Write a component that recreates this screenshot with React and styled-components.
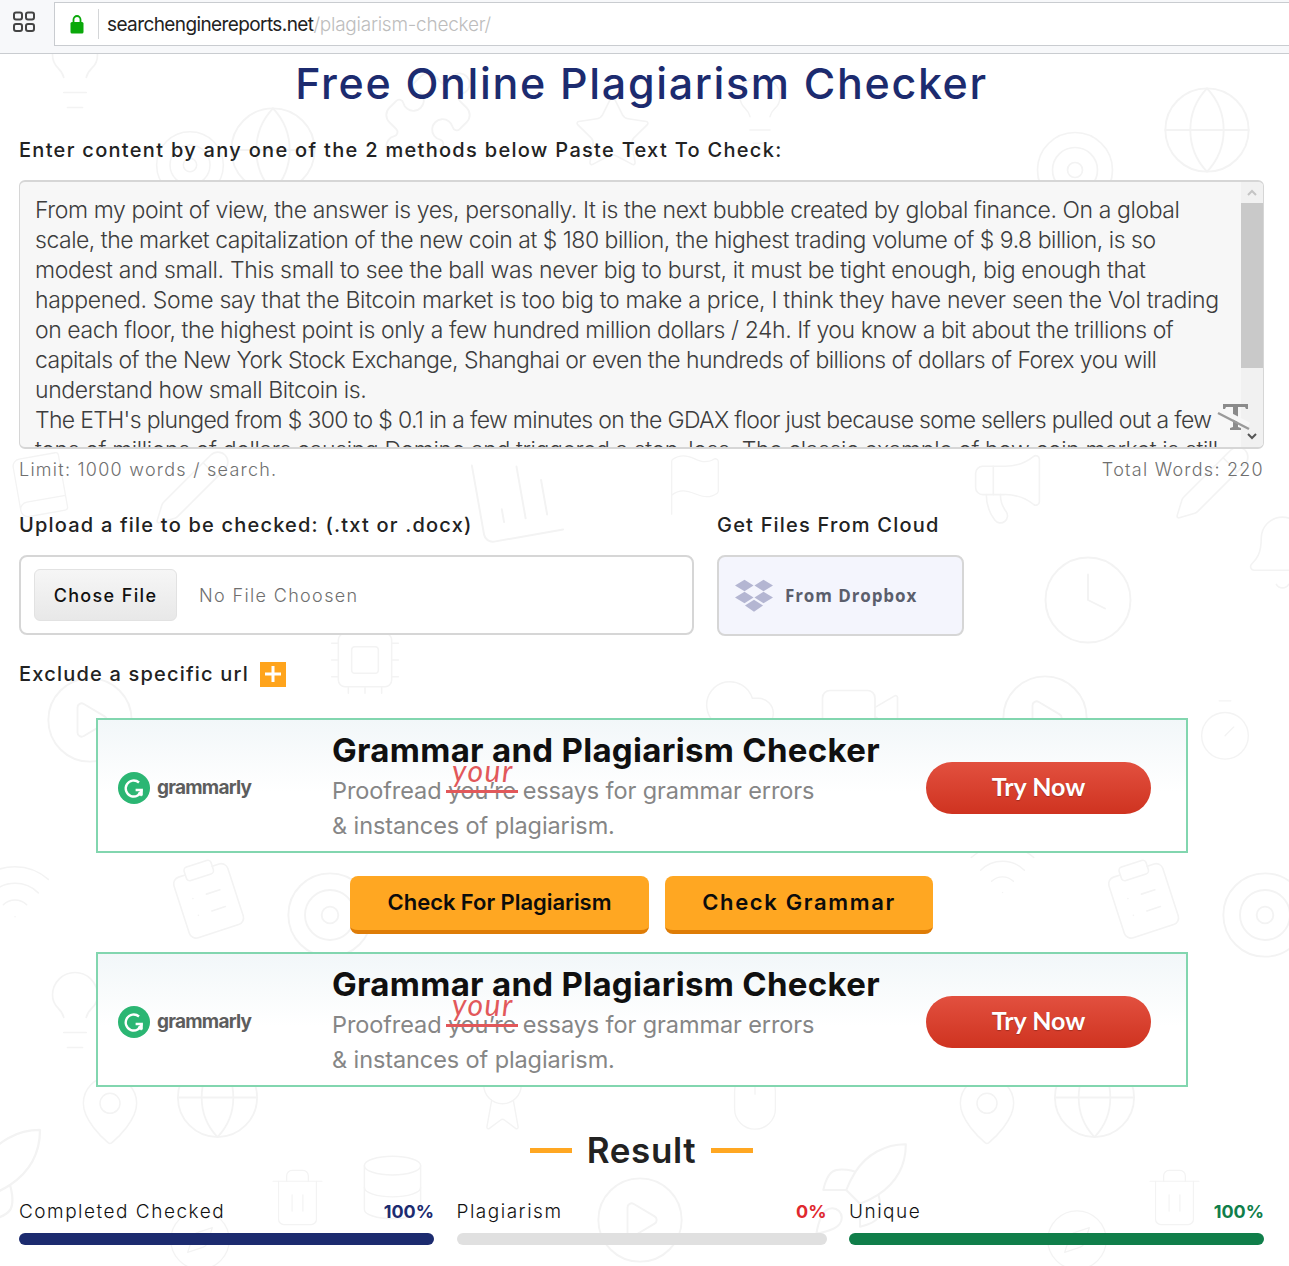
import React from "react";
import styled, { createGlobalStyle } from "styled-components";
import {
  Lightbulb, Globe, Puzzle, Star, Target, Clock, Pencil, Bell, Megaphone, CirclePlay, ChartColumn, Flag,
  Cpu, Cloud, Video, Timer, ClipboardList, Wifi, Rocket, MapPin, Trash2, Compass, Database, Award, Mouse, Book,
} from "lucide-react";

const UI_FONT = `"Inter", "Liberation Sans", sans-serif`;

const GlobalStyle = createGlobalStyle`
  html, body { margin: 0; padding: 0; background: #fff; }
  body { font-family: ${UI_FONT}; height: 1266px; overflow: hidden; }
`;

const Page = styled.div`
  position: relative;
  width: 1289px;
  height: 1266px;
  overflow: hidden;
`;

const Wallpaper = styled.svg`
  position: absolute;
  top: 0;
  left: 0;
  color: #f3f3f3;
`;

const Chrome = styled.header`
  position: relative;
  height: 53px;
  background: #f7f8fa;
  border-bottom: 1px solid #c9ccd0;
  display: flex;
  align-items: flex-start;
`;

const AppsButton = styled.div`
  width: 48px;
  padding-right: 6px;
  height: 44px;
  display: flex;
  align-items: center;
  justify-content: center;
`;

const AddressBar = styled.div`
  flex: 1;
  height: 42px;
  margin-top: 2px;
  background: #fff;
  border: 1px solid #c9ccd0;
  border-right: 0;
  display: flex;
  align-items: center;
`;

const LockSlot = styled.div`
  width: 43px;
  height: 30px;
  display: flex;
  align-items: center;
  justify-content: center;
  border-right: 1px solid #d4d6d8;
`;

const Url = styled.div`
  margin-left: 8px;
  font-size: 19px;
  font-weight: 400;
  letter-spacing: -0.6px;
  color: #222;
  span { color: #bdbdbd; font-weight: 300; letter-spacing: -0.25px; }
`;

const Main = styled.main`
  position: relative;
  padding: 0 25px 0 19px;
  display: flex;
  flex-direction: column;
`;

const Title = styled.h1`
  margin: 3px 0 0;
  height: 52px;
  line-height: 52px;
  text-align: center;
  font-size: 43px;
  font-weight: 500;
  letter-spacing: 1.65px;
  color: #1c2b6f;
`;

const Label = styled.div`
  font-size: 20px;
  font-weight: 500;
  line-height: 28px;
  letter-spacing: ${(p) => p.$spacing || "1.2px"};
  color: #222;
`;

const LeadLabel = styled(Label)`
  margin-top: 27px;
`;

const TextBox = styled.div`
  margin-top: 16px;
  height: 269px;
  box-sizing: border-box;
  border: 1px solid #d6d6d6;
  border-top: 2px solid #d6d6d6;
  border-bottom: 2px solid #d6d6d6;
  border-radius: 6px;
  background: #f7f7f7;
  display: flex;
  overflow: hidden;
  position: relative;
`;

const TextLines = styled.div`
  flex: 1;
  padding: 13px 0 0 15px;
  font-size: 23px;
  font-weight: 300;
  line-height: 30px;
  color: #3d3d3d;
  white-space: nowrap;
  overflow: hidden;
`;

const PassageLine = styled.div`
  letter-spacing: ${(p) => p.$spacing}px;
`;

const ScrollTrack = styled.div`
  width: 22px;
  background: #f1f1f1;
  display: flex;
  flex-direction: column;
`;

const ScrollArrow = styled.div`
  height: ${(p) => p.$h}px;
  display: flex;
  align-items: center;
  justify-content: center;
`;

const ScrollThumb = styled.div`
  height: 165px;
  background: #c9c9c9;
`;

const ScrollRest = styled.div`
  flex: 1;
`;

const TextSizeMark = styled.svg`
  position: absolute;
  left: 1195px;
  top: 219px;
`;

const LimitRow = styled.div`
  display: flex;
  justify-content: space-between;
  margin-top: 7px;
  height: 27px;
  line-height: 27px;
  font-size: 18px;
  font-weight: 300;
  letter-spacing: 1.25px;
  color: #6f6f6f;
`;

const UploadGrid = styled.div`
  margin-top: 28px;
  display: grid;
  grid-template-columns: 698px 247px;
  row-gap: 16px;
`;

const UploadBox = styled.div`
  width: 675px;
  height: 80px;
  box-sizing: border-box;
  border: 2px solid #d6d6d6;
  border-radius: 8px;
  padding-left: 13px;
  background: #fff;
  display: flex;
  align-items: center;
`;

const ChooseButton = styled.div`
  width: 143px;
  height: 52px;
  box-sizing: border-box;
  border: 1px solid #e2e2e2;
  border-radius: 6px;
  background: linear-gradient(#f6f6f6, #e8e8e8);
  display: flex;
  align-items: center;
  justify-content: center;
  font-size: 18px;
  font-weight: 500;
  letter-spacing: 1.35px;
  color: #111;
`;

const NoFile = styled.div`
  margin-left: 22px;
  font-size: 18px;
  font-weight: 300;
  letter-spacing: 1.35px;
  color: #6f6f6f;
`;

const DropboxBox = styled.div`
  height: 81px;
  box-sizing: border-box;
  border: 2px solid #d6d6d6;
  border-radius: 8px;
  background: #f4f5fd;
  padding-left: 16px;
  display: flex;
  align-items: center;
  gap: 12px;
  font-family: "Open Sans", sans-serif;
  font-size: 17px;
  font-weight: 700;
  letter-spacing: 0.9px;
  color: #5b5e6c;
`;

const ExcludeRow = styled.div`
  margin-top: 24px;
  height: 28px;
  display: flex;
  align-items: center;
  gap: 11px;
`;

const PlusBox = styled.div`
  width: 26px;
  height: 25px;
  background: #ffa41c;
  display: flex;
  align-items: center;
  justify-content: center;
`;

const Banner = styled.div`
  margin: ${(p) => p.$top}px 0 0 77px;
  width: 1092px;
  height: 135px;
  box-sizing: border-box;
  border: 2px solid #82d6af;
  background: linear-gradient(#f2f7f9, #fff 55%);
  display: flex;
  font-family: ${UI_FONT};
`;

const Brand = styled.div`
  width: 234px;
  padding: 4px 0 0 20px;
  box-sizing: border-box;
  display: flex;
  align-items: center;
  gap: 7px;
  font-size: 19px;
  font-weight: 700;
  letter-spacing: -0.75px;
  color: #5d5d5d;
`;

const BannerCopy = styled.div`
  width: 594px;
  display: flex;
  flex-direction: column;
`;

const BannerTitle = styled.div`
  margin-top: 9px;
  height: 44px;
  line-height: 42px;
  font-size: 33px;
  font-weight: 700;
  letter-spacing: 0.3px;
  color: #101010;
  white-space: nowrap;
`;

const BannerLine = styled.div`
  height: 35px;
  line-height: 35px;
  font-size: 23.5px;
  font-weight: 400;
  letter-spacing: -0.1px;
  color: #868686;
  white-space: nowrap;
`;

const Struck = styled.span`
  position: relative;
  &::after {
    content: "";
    position: absolute;
    left: -2px;
    right: -2px;
    top: 14px;
    height: 3px;
    background: #e2585a;
  }
`;

const Correction = styled.span`
  position: absolute;
  left: 4px;
  top: -21px;
  font-family: "Lato", sans-serif;
  font-style: italic;
  font-size: 30px;
  line-height: 30px;
  letter-spacing: 1.5px;
  color: #e2585a;
`;

const TryNow = styled.div`
  margin-top: 42px;
  width: 225px;
  height: 52px;
  padding-bottom: 4px;
  box-sizing: border-box;
  border-radius: 26px;
  background: linear-gradient(#e2503f, #cf3320);
  display: flex;
  align-items: center;
  justify-content: center;
  font-family: "Lato", sans-serif;
  font-size: 25px;
  font-weight: 700;
  color: #fff;
  text-shadow: 0 1px 1px rgba(0, 0, 0, 0.25);
`;

const Actions = styled.div`
  margin-top: 23px;
  display: flex;
  padding-left: 331px;
  gap: 16px;
`;

const ActionButton = styled.div`
  width: ${(p) => p.$w}px;
  height: 58px;
  box-sizing: border-box;
  padding-bottom: 2px;
  border-radius: 8px;
  border-bottom: 4px solid #de7c06;
  background: #ffa722;
  display: flex;
  align-items: center;
  justify-content: center;
  font-size: 22px;
  font-weight: 600;
  letter-spacing: ${(p) => p.$spacing};
  color: #0c0c0c;
`;

const ResultHead = styled.div`
  margin-top: 40px;
  height: 46px;
  display: flex;
  align-items: center;
  justify-content: center;
  gap: 15px;
  font-size: 35px;
  font-weight: 600;
  letter-spacing: 0.6px;
  color: #222;
`;

const Dash = styled.i`
  width: 42px;
  height: 5px;
  background: #ffa722;
`;

const Stats = styled.div`
  margin-top: 23px;
  display: flex;
  justify-content: space-between;
`;

const Stat = styled.div`
  width: ${(p) => p.$w}px;
`;

const StatHead = styled.div`
  height: 30px;
  display: flex;
  justify-content: space-between;
  align-items: center;
  font-size: 19px;
  font-weight: 300;
  letter-spacing: 1.5px;
  color: #111;
  b {
    font-size: 18px;
    font-weight: 700;
    letter-spacing: 0;
    color: ${(p) => p.$accent};
  }
`;

const Bar = styled.div`
  margin-top: 7px;
  height: 12px;
  border-radius: 6px;
  background: #e0e0e0;
  overflow: hidden;
`;

const BarFill = styled.div`
  height: 100%;
  background: ${(p) => p.$color};
`;

// icon, x, y, size, rotation: the faint drawings behind the page
const wallpaper = [
  [Lightbulb, 30, 25, 90], [Globe, 223, 100, 100], [Puzzle, 378, 65, 100], [Star, 570, 90, 85],
  [Lightbulb, 720, 70, 80], [Globe, 1157, 80, 100], [Target, 1030, 125, 90], [Target, 150, 125, 80],
  [Book, 5, 450, 70, -10], [Pencil, 150, 445, 85], [ChartColumn, 465, 445, 105, -10], [Megaphone, 965, 445, 85],
  [Flag, 660, 450, 70], [Pencil, 1170, 440, 85], [Clock, 1037, 549, 102], [Bell, 1240, 510, 85],
  [CirclePlay, 995, 668, 100], [Cpu, 325, 620, 80], [CirclePlay, 40, 670, 100], [Cloud, 700, 665, 80],
  [Video, 815, 668, 90], [Timer, 1190, 695, 70], [ClipboardList, 165, 855, 85, -18], [ClipboardList, 1100, 855, 85, -18],
  [Target, 280, 865, 100], [Target, 1215, 865, 100], [Wifi, 965, 830, 75], [Wifi, -25, 850, 80],
  [Lightbulb, 30, 965, 90], [Lightbulb, 907, 965, 90], [Rocket, -70, 1120, 120], [Rocket, 805, 1135, 110],
  [MapPin, 70, 1070, 80], [MapPin, 947, 1070, 80], [Globe, 170, 1050, 95], [Globe, 1047, 1050, 95],
  [Trash2, 265, 1165, 65], [Trash2, 1142, 1165, 65], [Compass, 165, 1205, 70], [Compass, 1042, 1205, 70],
  [Database, 355, 1150, 75], [Award, 465, 1060, 75], [CirclePlay, 590, 1170, 100], [Mouse, 720, 1065, 70],
];

// each line carries its own tracking so the rag of the text stays the same
const passage = [
  ["From my point of view, the answer is yes, personally. It is the next bubble created by global finance. On a global", -0.41],
  ["scale, the market capitalization of the new coin at $ 180 billion, the highest trading volume of $ 9.8 billion, is so", -0.485],
  ["modest and small. This small to see the ball was never big to burst, it must be tight enough, big enough that", -0.33],
  ["happened. Some say that the Bitcoin market is too big to make a price, I think they have never seen the Vol trading", -0.3],
  ["on each floor, the highest point is only a few hundred million dollars / 24h. If you know a bit about the trillions of", -0.43],
  ["capitals of the New York Stock Exchange, Shanghai or even the hundreds of billions of dollars of Forex you will", -0.535],
  ["understand how small Bitcoin is.", -0.4],
  ["The ETH's plunged from $ 300 to $ 0.1 in a few minutes on the GDAX floor just because some sellers pulled out a few", -0.67],
  ["tons of millions of dollars causing Domino and triggered a stop-loss. The classic example of how coin market is still", -0.38],
];

const stats = [
  { label: "Completed Checked", value: "100%", w: 415, accent: "#1c2b6f", fill: "#1c2b6f", pct: 100 },
  { label: "Plagiarism", value: "0%", w: 370, accent: "#e0282e", fill: "#e0282e", pct: 0 },
  { label: "Unique", value: "100%", w: 415, accent: "#107e4a", fill: "#107e4a", pct: 100 },
];

function GrammarlyMark() {
  return (
    <svg width="32" height="32" viewBox="0 0 32 32">
      <circle cx="16" cy="16" r="16" fill="#2bb673" />
      <path d="M21 10.500a8 8 0 1 0 2.600 7.500h-6" fill="none" stroke="#fff" strokeWidth="2.400" />
      <path d="M23.800 18v5.400M20.500 20.500l3.300 3.300" fill="none" stroke="#fff" strokeWidth="2" />
    </svg>
  );
}

function DropboxMark() {
  return (
    <svg width="38" height="34" viewBox="0 0 40 34" fill="#b4b6d2">
      <path d="M10 0l9.500 6-9.500 6-10-6zM30 0l10 6-10 6-9.500-6zM10 12.500l9.500 6-9.500 6-10-6zM30 12.500l10 6-10 6-9.500-6zM20 21l9.500 6-9.500 6.500L10.500 27z" />
    </svg>
  );
}

function AdBanner({ top }) {
  return (
    <Banner $top={top}>
      <Brand>
        <GrammarlyMark />
        grammarly
      </Brand>
      <BannerCopy>
        <BannerTitle>Grammar and Plagiarism Checker</BannerTitle>
        <BannerLine>
          Proofread{" "}
          <Struck>
            you’re
            <Correction>your</Correction>
          </Struck>{" "}
          essays for grammar errors
        </BannerLine>
        <BannerLine>&amp; instances of plagiarism.</BannerLine>
      </BannerCopy>
      <TryNow>Try Now</TryNow>
    </Banner>
  );
}

export default function App() {
  return (
    <Page>
      <GlobalStyle />
      <Wallpaper width="1289" height="1266">
        {wallpaper.map(([Icon, x, y, size, turn = 0], i) => (
          <g key={i} transform={`rotate(${turn} ${x + size / 2} ${y + size / 2})`}>
            <Icon x={x} y={y} width={size} height={size} strokeWidth={0.45} />
          </g>
        ))}
      </Wallpaper>

      <Chrome>
        <AppsButton>
          <svg width="24" height="24" viewBox="0 0 24 24" fill="none" stroke="#444" strokeWidth="2">
            <rect x="2" y="2.500" width="8" height="7" rx="2" />
            <rect x="14" y="2.500" width="8" height="7" rx="2" />
            <rect x="2" y="14" width="8" height="7" rx="2" />
            <rect x="14" y="14" width="8" height="7" rx="2" />
          </svg>
        </AppsButton>
        <AddressBar>
          <LockSlot>
            <svg width="14" height="20" viewBox="0 0 14 20">
              <path d="M3.500 9V5.500a3.500 3.500 0 0 1 7 0V9" fill="none" stroke="#0aa80a" strokeWidth="1.800" />
              <rect x="0.500" y="8" width="13" height="11.500" rx="1.500" fill="#0aa80a" />
            </svg>
          </LockSlot>
          <Url>
            searchenginereports.net<span>/plagiarism-checker/</span>
          </Url>
        </AddressBar>
      </Chrome>

      <Main>
        <Title>Free Online Plagiarism Checker</Title>
        <LeadLabel $spacing="1.3px">Enter content by any one of the 2 methods below Paste Text To Check:</LeadLabel>
        <TextBox>
          <TextLines>
            {passage.map(([line, spacing]) => (
              <PassageLine key={line} $spacing={spacing}>{line}</PassageLine>
            ))}
          </TextLines>
          <ScrollTrack>
            <ScrollArrow $h={21}>
              <svg width="10" height="7" viewBox="0 0 10 7" fill="none" stroke="#c4c4c4" strokeWidth="2">
                <path d="M1 6l4-4 4 4" />
              </svg>
            </ScrollArrow>
            <ScrollThumb />
            <ScrollRest />
            <ScrollArrow $h={21}>
              <svg width="10" height="7" viewBox="0 0 10 7" fill="none" stroke="#555" strokeWidth="2">
                <path d="M1 1l4 4 4-4" />
              </svg>
            </ScrollArrow>
          </ScrollTrack>
          <TextSizeMark width="36" height="34" viewBox="0 0 36 34">
            <path d="M8 3h25v5h-2l-1-2h-7v20l3 1v2H15v-2l3-1V6h-7l-1 2H8z" fill="#8b8b8b" />
            <path d="M3 8l31 16" stroke="#f7f7f7" strokeWidth="5" />
            <path d="M3 12l31 16" stroke="#9a9a9a" strokeWidth="2.500" />
          </TextSizeMark>
        </TextBox>
        <LimitRow>
          <span>Limit: 1000 words / search.</span>
          <span>Total Words: 220</span>
        </LimitRow>

        <UploadGrid>
          <Label>Upload a file to be checked: (.txt or .docx)</Label>
          <Label>Get Files From Cloud</Label>
          <UploadBox>
            <ChooseButton>Chose File</ChooseButton>
            <NoFile>No File Choosen</NoFile>
          </UploadBox>
          <DropboxBox>
            <DropboxMark />
            From Dropbox
          </DropboxBox>
        </UploadGrid>

        <ExcludeRow>
          <Label>Exclude a specific url</Label>
          <PlusBox>
            <svg width="16" height="16" viewBox="0 0 16 16" fill="#fff">
              <path d="M6.500 0h3v6.500H16v3H9.500V16h-3V9.500H0v-3h6.500z" />
            </svg>
          </PlusBox>
        </ExcludeRow>

        <AdBanner top={30} />
        <Actions>
          <ActionButton $w={299} $spacing="-0.05px">Check For Plagiarism</ActionButton>
          <ActionButton $w={268} $spacing="1.65px">Check Grammar</ActionButton>
        </Actions>
        <AdBanner top={18} />

        <ResultHead>
          <Dash />
          Result
          <Dash />
        </ResultHead>
        <Stats>
          {stats.map((s) => (
            <Stat key={s.label} $w={s.w}>
              <StatHead $accent={s.accent}>
                <span>{s.label}</span>
                <b>{s.value}</b>
              </StatHead>
              <Bar>
                <BarFill $color={s.fill} style={{ width: `${s.pct}%` }} />
              </Bar>
            </Stat>
          ))}
        </Stats>
      </Main>
    </Page>
  );
}
